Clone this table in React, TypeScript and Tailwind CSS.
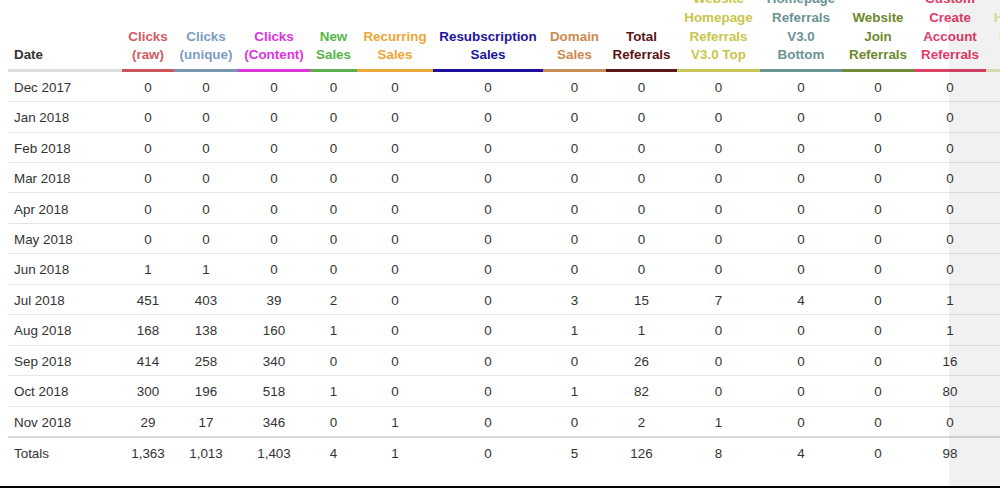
import React from "react";

type Col = { lines: string[]; w: number; text: string; bar: string };

const cols: Col[] = [
  { lines: ["Clicks", "(raw)"], w: 52, text: "text-[#d65a5f]", bar: "border-[#c9575a]" },
  { lines: ["Clicks", "(unique)"], w: 64, text: "text-[#7d9cc4]", bar: "border-[#7896b0]" },
  { lines: ["Clicks", "(Content)"], w: 72, text: "text-[#e033e0]", bar: "border-[#dc36d8]" },
  { lines: ["New", "Sales"], w: 47, text: "text-[#55b747]", bar: "border-[#5cae4f]" },
  { lines: ["Recurring", "Sales"], w: 76, text: "text-[#f0a535]", bar: "border-[#eaa93a]" },
  { lines: ["Resubscription", "Sales"], w: 110, text: "text-[#1c159e]", bar: "border-[#1f0d9c]" },
  { lines: ["Domain", "Sales"], w: 63, text: "text-[#d08a4e]", bar: "border-[#c88e58]" },
  { lines: ["Total", "Referrals"], w: 71, text: "text-[#5a1515]", bar: "border-[#5c1818]" },
  { lines: ["Website", "Homepage", "Referrals", "V3.0 Top"], w: 83, text: "text-[#c9c64a]", bar: "border-[#c8c858]" },
  { lines: ["Homepage", "Referrals", "V3.0", "Bottom"], w: 82, text: "text-[#6b9393]", bar: "border-[#6c9595]" },
  { lines: ["Website", "Join", "Referrals"], w: 72, text: "text-[#6b8a2c]", bar: "border-[#6f8b3b]" },
  { lines: ["Custom", "Create", "Account", "Referrals"], w: 72, text: "text-[#e23c6a]", bar: "border-[#dc4466]" },
  { lines: ["Homepage", "Referrals", "V2 Top"], w: 84, text: "text-[#e3e3a4]", bar: "border-[#e5e5bb]" },
];

const z = ["0", "0", "0", "0", "0", "0", "0", "0", "0", "0", "0", "0", "0"];

const rows: [string, string[]][] = [
  ["Dec 2017", z],
  ["Jan 2018", z],
  ["Feb 2018", z],
  ["Mar 2018", z],
  ["Apr 2018", z],
  ["May 2018", z],
  ["Jun 2018", ["1", "1", "0", "0", "0", "0", "0", "0", "0", "0", "0", "0", "0"]],
  ["Jul 2018", ["451", "403", "39", "2", "0", "0", "3", "15", "7", "4", "0", "1", "0"]],
  ["Aug 2018", ["168", "138", "160", "1", "0", "0", "1", "1", "0", "0", "0", "1", "0"]],
  ["Sep 2018", ["414", "258", "340", "0", "0", "0", "0", "26", "0", "0", "0", "16", "0"]],
  ["Oct 2018", ["300", "196", "518", "1", "0", "0", "1", "82", "0", "0", "0", "80", "0"]],
  ["Nov 2018", ["29", "17", "346", "0", "1", "0", "0", "2", "1", "0", "0", "0", "0"]],
];

const totals = ["1,363", "1,013", "1,403", "4", "1", "0", "5", "126", "8", "4", "0", "98", "0"];

export default function App() {
  return (
    <div className="relative w-[1000px] h-[488px] overflow-hidden bg-white border-b-2 border-black font-['Liberation_Sans',Arial,sans-serif] text-[13.4px] text-[#333]">
      <div className="pl-2 -mt-[10px]">
        <table className="table-fixed border-separate border-spacing-0 w-max">
          <colgroup>
            <col className="w-[114px]" />
            {cols.map((c, i) => (
              <col key={i} style={{ width: c.w }} />
            ))}
          </colgroup>
          <thead>
            <tr>
              <th className="align-bottom text-left font-bold leading-[18.8px] pl-[6px] pb-[3.5px] border-b-[3px] border-[#dddddd] text-[#333]">
                Date
              </th>
              {cols.map((c, i) => (
                <th
                  key={i}
                  className={`align-bottom text-center font-bold leading-[18.8px] pb-[3.5px] border-b-[3px] whitespace-nowrap ${c.text} ${c.bar}`}
                >
                  {c.lines.map((l, j) => (
                    <div key={j}>{l}</div>
                  ))}
                </th>
              ))}
            </tr>
          </thead>
          <tbody>
            {rows.map(([label, vals], ri) => {
              const last = ri === rows.length - 1;
              const b = last ? "" : "border-b border-[#e6e6e6]";
              return (
                <tr key={label}>
                  <td className={`pl-[6px] pt-[6.1px] pb-[4.35px] leading-[19px] whitespace-nowrap ${b}`}>{label}</td>
                  {vals.map((v, i) => (
                    <td key={i} className={`text-center pt-[6.1px] pb-[4.35px] leading-[19px] ${b}`}>
                      {v}
                    </td>
                  ))}
                </tr>
              );
            })}
            <tr>
              <td className="pl-[6px] pt-[6px] pb-[5px] leading-[19px] border-t-2 border-[#dadada]">Totals</td>
              {totals.map((v, i) => (
                <td key={i} className="text-center pt-[6px] pb-[5px] leading-[19px] border-t-2 border-[#dadada]">
                  {v}
                </td>
              ))}
            </tr>
          </tbody>
        </table>
      </div>
      <div className="absolute top-0 bottom-0 right-0 w-[51px] bg-black/[0.055] pointer-events-none" />
    </div>
  );
}
